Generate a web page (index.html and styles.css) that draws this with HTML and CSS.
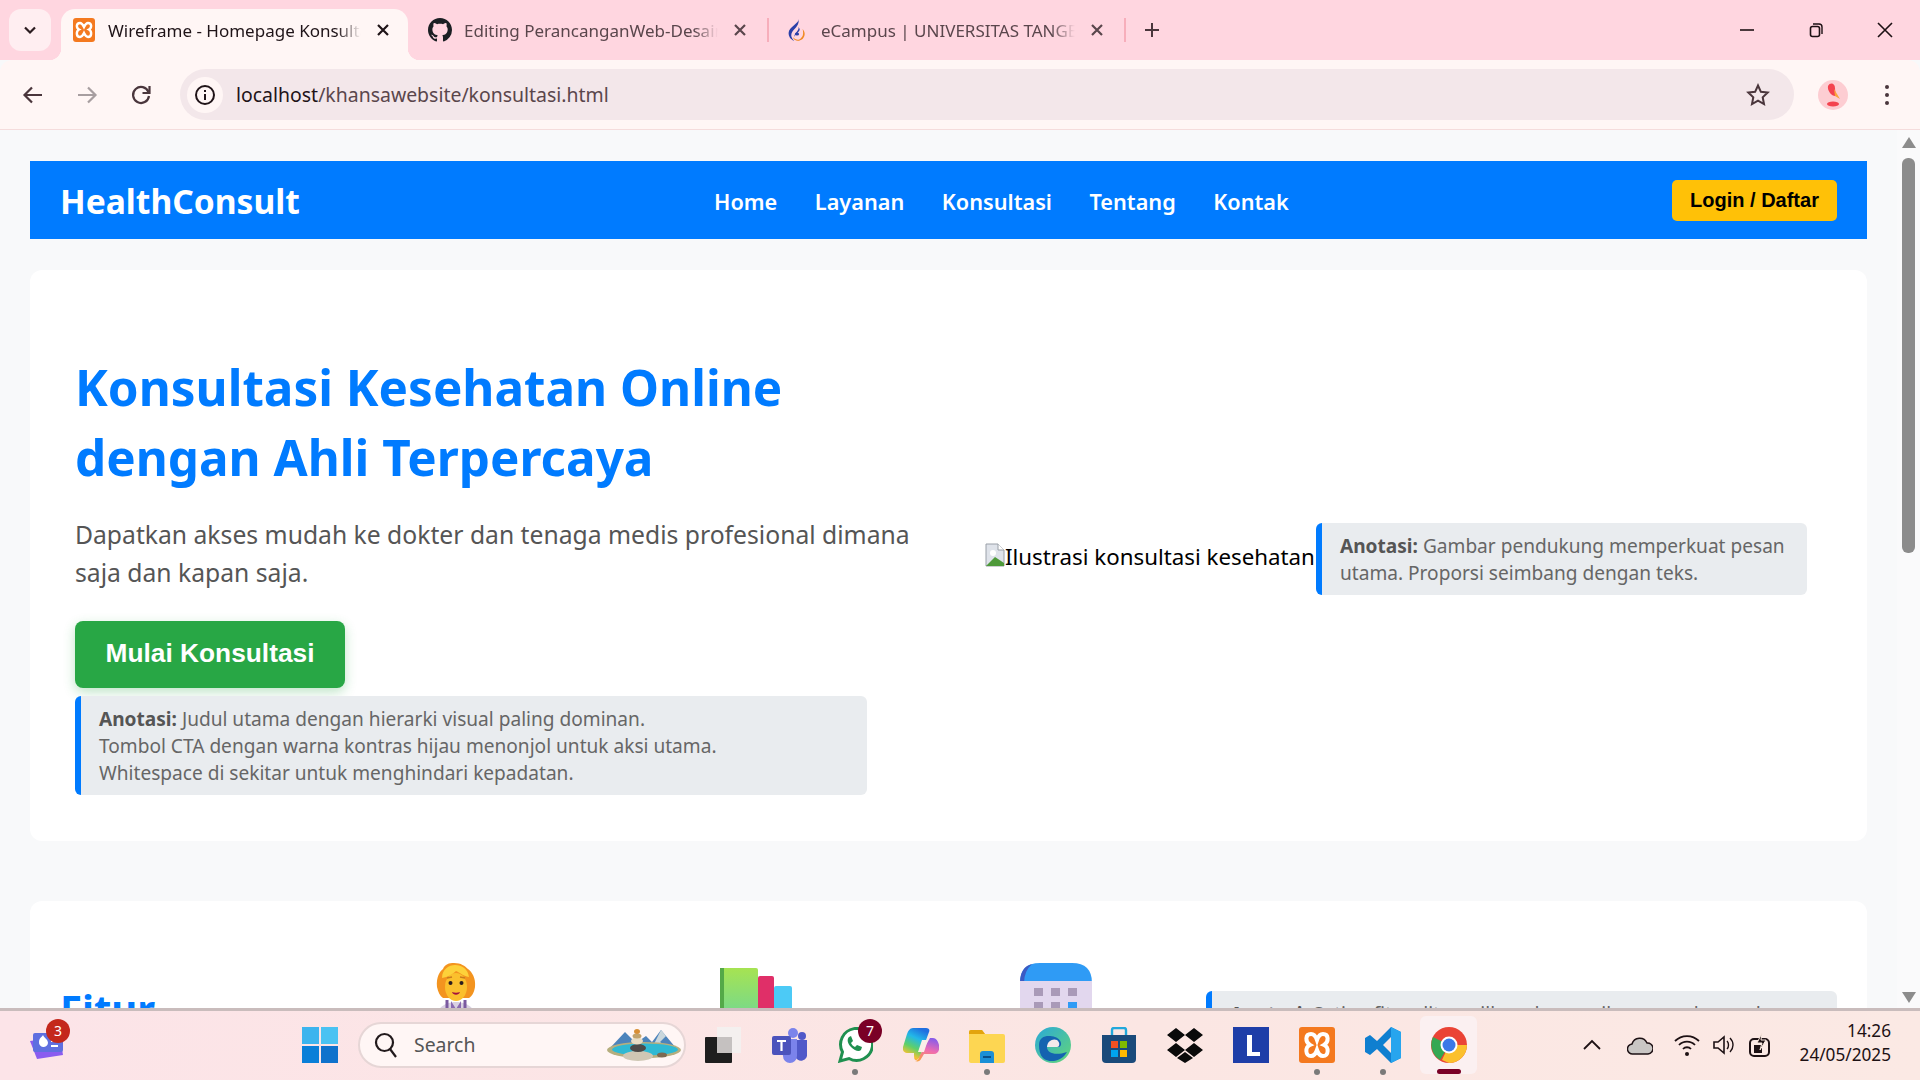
FILE: index.html
```html
<!DOCTYPE html>
<html lang="id">
<head>
    <meta charset="UTF-8">
    <title>Wireframe - Homepage Konsultasi</title>
    <link rel="stylesheet" href="styles.css">
</head>
<body>
    <!-- tab strip -->
    <div class="tabstrip">
        <button class="tab-search">
            <svg width="16" height="16" viewBox="0 0 16 16"><path d="M3 5.500l5 5 5-5" fill="none" stroke="#2b1c20" stroke-width="2.200"/></svg>
        </button>
        <div class="tab tab-active">
            <svg class="favicon" viewBox="0 0 24 24"><rect x="1" width="22" height="24" rx="3" fill="#f4791f"/><path d="M8 5c-4 0-4 5-1 6.500C4 13 4 19 8 19c2 0 3-2 4-4 1 2 2 4 4 4 4 0 4-6 1-7.500 3-1.500 3-6.500-1-6.500-2 0-3 2-4 4-1-2-2-4-4-4z" fill="none" stroke="#fff" stroke-width="2.400"/></svg>
            <span class="tab-title">Wireframe - Homepage Konsultasi</span>
            <svg class="tab-close" viewBox="0 0 12 12"><path d="M1 1l10 10M11 1L1 11" stroke="#1f1418" stroke-width="2.200"/></svg>
        </div>
        <div class="tab">
            <svg class="favicon" viewBox="0 0 16 16"><path fill="#1b1f23" d="M8 0C3.580 0 0 3.580 0 8c0 3.540 2.290 6.530 5.470 7.590.4.070.55-.17.55-.38 0-.19-.01-.82-.01-1.490-2.010.37-2.530-.49-2.690-.94-.09-.23-.48-.94-.82-1.130-.28-.15-.68-.52-.01-.53.63-.01 1.080.58 1.230.82.72 1.210 1.870.87 2.330.66.070-.52.28-.87.51-1.070-1.780-.2-3.640-.89-3.640-3.950 0-.87.310-1.590.820-2.150-.08-.2-.36-1.020.08-2.120 0 0 .67-.21 2.200.82.64-.18 1.320-.27 2-.27s1.360.09 2 .27c1.530-1.040 2.200-.82 2.200-.82.44 1.100.16 1.920.08 2.120.51.56.82 1.270.82 2.150 0 3.070-1.870 3.750-3.650 3.950.29.250.54.730.54 1.480 0 1.070-.01 1.930-.01 2.200 0 .21.15.46.55.38A8.010 8.010 0 0016 8c0-4.420-3.580-8-8-8z"/></svg>
            <span class="tab-title">Editing PerancanganWeb-Desain-Interaksi</span>
            <svg class="tab-close" viewBox="0 0 12 12"><path d="M1 1l10 10M11 1L1 11" stroke="#5a464c" stroke-width="2.200"/></svg>
            <i class="tab-sep"></i>
        </div>
        <div class="tab">
            <svg class="favicon" viewBox="0 0 24 24"><g transform="translate(12 0) scale(1.4 1) translate(-13 0)"><path d="M14 1c1 4-7 8-7 14 0 3 1 6 4 8-2-3-3-6-1-10 2-3 5-7 4-12z" fill="#2a3fa8"/><path d="M14 9c1 3-3 6-3 10 1-4 6-6 3-10z" fill="#2a3fa8"/><circle cx="13" cy="16" r="1.500" fill="#2a3fa8"/><path d="M17 11c2 3 2 7 0 10-1 1-3 2-5 2 3-1 4-3 5-5 .5-2 .5-4 0-7z" fill="#f08a24"/><path d="M10 19c1 2 3 3 5 3-2 1-4 1-5-3z" fill="#f08a24"/></g></svg>
            <span class="tab-title">eCampus | UNIVERSITAS TANGERANG RAYA</span>
            <svg class="tab-close" viewBox="0 0 12 12"><path d="M1 1l10 10M11 1L1 11" stroke="#5a464c" stroke-width="2.200"/></svg>
            <i class="tab-sep"></i>
        </div>
        <span class="tab-new">
            <svg width="16" height="16" viewBox="0 0 16 16"><path d="M8 1v14M1 8h14" stroke="#4a363c" stroke-width="2"/></svg>
        </span>
        <div class="window-controls">
            <svg width="16" height="16" viewBox="0 0 16 16"><path d="M1 8h14" stroke="#1d1114" stroke-width="1.600"/></svg>
            <svg width="16" height="16" viewBox="0 0 16 16"><rect x="2.500" y="4.500" width="9" height="10" rx="2" fill="none" stroke="#1d1114" stroke-width="1.600"/><path d="M5 2h6a3 3 0 013 3v7" fill="none" stroke="#1d1114" stroke-width="1.400"/></svg>
            <svg width="16" height="16" viewBox="0 0 16 16"><path d="M1 1l14 14M15 1L1 15" stroke="#1d1114" stroke-width="1.600"/></svg>
        </div>
    </div>

    <!-- address bar -->
    <div class="toolbar">
        <svg class="tool-icon" viewBox="0 0 24 24"><path d="M21 12H4M11 4.500L3.500 12l7.500 7.500" fill="none" stroke="#4a363c" stroke-width="2.200"/></svg>
        <svg class="tool-icon" viewBox="0 0 24 24"><path d="M3 12h17M13 4.500l7.500 7.500-7.500 7.500" fill="none" stroke="#a79ea0" stroke-width="2.200"/></svg>
        <svg class="tool-icon" viewBox="0 0 24 24"><path d="M19.500 9A8 8 0 1020 13" fill="none" stroke="#4a363c" stroke-width="2.200"/><path d="M20.500 3v7h-7" fill="none" stroke="#4a363c" stroke-width="2.200"/></svg>
        <div class="omnibox">
            <span class="site-info">
                <svg width="22" height="22" viewBox="0 0 22 22"><circle cx="11" cy="11" r="9" fill="none" stroke="#201418" stroke-width="2"/><path d="M11 10v6M11 6v2" stroke="#201418" stroke-width="2"/></svg>
            </span>
            <span class="url">localhost<span class="url-path">/khansawebsite/konsultasi.html</span></span>
            <svg class="star" width="24" height="24" viewBox="0 0 24 24"><path d="M12 2.500l2.900 6.300 6.800.8-5 4.700 1.300 6.800-6-3.400-6 3.400 1.300-6.800-5-4.700 6.800-.8z" fill="none" stroke="#4a363c" stroke-width="2"/></svg>
        </div>
        <span class="avatar">
            <svg width="30" height="30" viewBox="0 0 30 30"><circle cx="15" cy="15" r="15" fill="#fdcdd2"/><path d="M10 6c2-4 7-3 7 2 0 3 1 5 0 8-3 0-8-5-7-10z" fill="#f4434f"/><path d="M16 9l6 10-5-3z" fill="#f9a63a"/><ellipse cx="15" cy="24" rx="6" ry="2.500" fill="#f4434f"/></svg>
        </span>
        <span class="kebab"><i></i><i></i><i></i></span>
    </div>

    <div class="viewport">
        <main class="page">
            <nav class="navbar">
                <div class="logo">HealthConsult</div>
                <ul class="nav-links">
                    <li>Home</li>
                    <li>Layanan</li>
                    <li>Konsultasi</li>
                    <li>Tentang</li>
                    <li>Kontak</li>
                </ul>
                <button class="btn-login">Login / Daftar</button>
            </nav>

            <section class="card hero">
                <div class="hero-text">
                    <h1>Konsultasi Kesehatan Online dengan Ahli Terpercaya</h1>
                    <p>Dapatkan akses mudah ke dokter dan tenaga medis profesional dimana saja dan kapan saja.</p>
                    <button class="btn-cta">Mulai Konsultasi</button>
                    <div class="annotation annotation-hero">
                        <strong>Anotasi:</strong> Judul utama dengan hierarki visual paling dominan.<br>
                        Tombol CTA dengan warna kontras hijau menonjol untuk aksi utama.<br>
                        Whitespace di sekitar untuk menghindari kepadatan.
                    </div>
                </div>
                <div class="hero-image">
                    <span class="broken-img">
                        <svg class="broken-icon" viewBox="0 0 20 24"><path d="M1 1h12l6 6v16H1z" fill="#dfe3ea" stroke="#9aa0a8"/><path d="M13 1v6h6" fill="#fff" stroke="#9aa0a8"/><circle cx="8" cy="10" r="3" fill="#fff"/><path d="M1 23l9-9 9 6v3z" fill="#4e9a3a"/></svg>
                        <span>Ilustrasi konsultasi kesehatan</span>
                    </span>
                    <div class="annotation annotation-image">
                        <strong>Anotasi:</strong> Gambar pendukung memperkuat pesan utama. Proporsi seimbang dengan teks.
                    </div>
                </div>
            </section>

            <section class="card features">
                <h2>Fitur Utama</h2>
                <div class="feature-icon">
                    <svg width="44" height="80" viewBox="0 0 44 80"><path d="M1 60c0-14 9-21 21-21s21 7 21 21z" fill="#d9d0e2"/><path d="M13 37v23M31 37v23" stroke="#7a5aa0" stroke-width="3"/><path d="M17 38l5 8 5-8v16H17z" fill="#8a6ab0"/><path d="M3 24C2 14 6 8 9 6c2-5 6-6 11-6 7 0 11 3 14 6 4 3 8 9 7 18-1 6-3 9-6 11H9c-3-2-5-6-6-11z" fill="#f3941f"/><ellipse cx="22" cy="24" rx="11" ry="14" fill="#fbc02d"/><path d="M8 15C8 6 15 2 21 2c7 0 13 4 14 12-6-1-10-5-13-6-3 3-8 6-14 7z" fill="#fdd13a"/><path d="M13 15l5-1M26 14l5 1" stroke="#c97a1e" stroke-width="1.400"/><circle cx="16.500" cy="20" r="2" fill="#2b1c20"/><circle cx="27.500" cy="20" r="2" fill="#2b1c20"/><path d="M18 29c2.500 1 5.500 1 8 0-1 3.500-7 3.500-8 0z" fill="#a3123f"/></svg>
                </div>
                <div class="feature-icon">
                    <svg width="72" height="80" viewBox="0 0 72 80"><defs><linearGradient id="bar" x1="0" y1="0" x2="0" y2="1"><stop offset="0" stop-color="#a6e352"/><stop offset=".6" stop-color="#78d98a"/></linearGradient></defs><rect x="0" y="5" width="38" height="75" rx="2" fill="url(#bar)"/><rect x="0" y="5" width="4" height="75" fill="#54a948"/><rect x="38" y="13" width="16" height="67" rx="2" fill="#e02f68"/><rect x="54" y="23" width="18" height="57" rx="2" fill="#4ccaf6"/></svg>
                </div>
                <div class="feature-icon">
                    <svg width="72" height="80" viewBox="0 0 72 80"><path d="M0 20Q0 0 20 0h32q20 0 20 20z" fill="#2f9bf5"/><path d="M0 20Q0 4 12 1 4 8 4 20z" fill="#3b5bc4"/><rect x="0" y="18" width="72" height="62" fill="#e2d7ee"/><g fill="#a99ab8"><rect x="14" y="25" width="9" height="8"/><rect x="31" y="25" width="9" height="8"/><rect x="48" y="25" width="9" height="8"/><rect x="14" y="39" width="9" height="8"/><rect x="31" y="39" width="9" height="8"/></g><rect x="48" y="39" width="9" height="8" fill="#2f9bf5"/></svg>
                </div>
                <div class="annotation annotation-features">
                    <strong>Anotasi:</strong> Setiap fitur ditampilkan dengan ikon yang besar dan teks pendek agar mudah dipindai.
                </div>
            </section>
        </main>
        <div class="scrollbar">
            <i class="arrow-up"></i>
            <i class="thumb"></i>
            <i class="arrow-down"></i>
        </div>
    </div>

    <!-- windows taskbar -->
    <footer class="taskbar">
        <span class="widget">
            <svg width="36" height="36" viewBox="0 0 36 36"><path d="M0 14l30-4 3 18-26 4z" fill="#8a5cf0"/><path d="M27 3l7 0v10h-7z" fill="#2fb6d8"/><rect x="3" y="6" width="30" height="19" rx="2" fill="#5f6fe0"/><path d="M9 15c0-4 3-5 4-7 1 3 5 4 5 8a4.500 4.500 0 01-9-1z" fill="#fff"/><path d="M21 14h9M21 19h7" stroke="#fff" stroke-width="2"/></svg>
            <b class="badge badge-red">3</b>
        </span>
        <div class="task-center">
            <svg class="task-icon" viewBox="0 0 36 36"><path d="M0 0h17v17H0z" fill="#3cb4ee"/><path d="M19 0h17v17H19z" fill="#4ac2f2"/><path d="M0 19h17v17H0z" fill="#0a7fd8"/><path d="M19 19h17v17H19z" fill="#0f72cc"/></svg>
            <div class="searchbox">
                <svg width="24" height="26" viewBox="0 0 24 26"><circle cx="10.500" cy="10.500" r="8.500" fill="none" stroke="#221a1c" stroke-width="2.200"/><path d="M16 17l6 8" stroke="#221a1c" stroke-width="2.200"/></svg>
                <span class="search-label">Search</span>
                <svg class="search-art" width="76" height="34" viewBox="0 0 76 34"><path d="M4 20L19 4l11 11L40 8l6 6 9-12 15 18z" fill="#4c83bb"/><path d="M55 2l5 6-6 6 8 6H46z" fill="#c9d6dc"/><ellipse cx="38" cy="22" rx="37" ry="8" fill="#b5ae7e"/><ellipse cx="39" cy="21.500" rx="33" ry="6" fill="#2fb9d3"/><ellipse cx="32" cy="28" rx="15" ry="5" fill="#cfc7b4"/><ellipse cx="32" cy="20" rx="8" ry="4" fill="#4d4a48"/><ellipse cx="31" cy="13" rx="6" ry="3.500" fill="#e8dcc4"/><ellipse cx="31" cy="8" rx="4.500" ry="2.500" fill="#c2a36c"/><ellipse cx="31" cy="3.500" rx="3" ry="2.500" fill="#d88f36"/><ellipse cx="56" cy="27" rx="5" ry="2.500" fill="#7c6a52"/></svg>
            </div>
            <svg class="task-icon" viewBox="0 0 36 36"><rect x="12" y="0" width="24" height="26" fill="#f4f0ef"/><rect y="10" width="27" height="26" rx="1" fill="#1e1e1e"/><rect x="12" y="10" width="15" height="16" fill="#c5c1c0"/></svg>
            <svg class="task-icon" viewBox="0 0 36 36"><circle cx="22" cy="6" r="5" fill="#7b83eb"/><circle cx="31" cy="9" r="4" fill="#5059c9"/><path d="M20 13h16v13a6 6 0 01-12 3z" fill="#5059c9"/><path d="M9 12h17v17a7 7 0 01-14 0z" fill="#7b83eb"/><rect x="1" y="9" width="19" height="19" rx="2" fill="#4b53bc"/><path d="M6 14h9M10.500 14v10" stroke="#fff" stroke-width="2.200"/></svg>
            <span class="task-item task-open">
                <svg class="task-icon" viewBox="0 0 36 36"><path d="M3 34l2.500-9A16 16 0 1112 31.500z" fill="#fff" stroke="#1f9050" stroke-width="3"/><path d="M12 10c-2 2-2 6 2 10s8 5 10 3l1-3-5-2-2 2c-2-1-3-2-4-4l2-2-2-5z" fill="#1f9050"/></svg>
                <b class="badge badge-wine">7</b>
            </span>
            <svg class="task-icon" viewBox="0 0 36 36"><defs><linearGradient id="copl" x1="0.600" y1="0" x2="0.200" y2="1"><stop offset="0" stop-color="#1f6fe0"/><stop offset=".3" stop-color="#22b8e8"/><stop offset=".6" stop-color="#5fd068"/><stop offset=".85" stop-color="#f5c232"/><stop offset="1" stop-color="#f0602c"/></linearGradient><linearGradient id="copr" x1="0.600" y1="0" x2="0.300" y2="1"><stop offset="0" stop-color="#8a5ce8"/><stop offset=".5" stop-color="#f06cb0"/><stop offset="1" stop-color="#f8a040"/></linearGradient></defs><path d="M10 1h13c3 0 4 2 3 4l-7 19c-1 3-3 9-6 9-2 0-2-3-2-7H4c-3 0-5-3-4-6L4 7c1-3 3-6 6-6z" fill="url(#copl)"/><path d="M27 11h3c3 0 5 3 6 7 1 5-1 9-5 9H21l-3 5c-1 2-3 3-6 2 3 0 4-3 5-6z" fill="url(#copr)"/><path d="M19 13h6l-4 12h-6z" fill="#fbeee8"/></svg>
            <span class="task-item task-open">
                <svg class="task-icon" viewBox="0 0 36 36"><path d="M0 5a2 2 0 012-2h11l3 4h18a2 2 0 012 2v25a2 2 0 01-2 2H2a2 2 0 01-2-2z" fill="#fdd652"/><path d="M0 5a2 2 0 012-2h11l3 4H0z" fill="#e3a40d"/><path d="M11 27a3 3 0 013-3h8a3 3 0 013 3v9H11z" fill="#1b8fd6"/><path d="M14 30h8" stroke="#0a4f88" stroke-width="2"/></svg>
            </span>
            <svg class="task-icon" viewBox="0 0 36 36"><defs><linearGradient id="edg" x1="0" y1="0" x2="1" y2="1"><stop offset="0" stop-color="#2aa8d8"/><stop offset="1" stop-color="#63d678"/></linearGradient></defs><circle cx="18" cy="18" r="18" fill="url(#edg)"/><path d="M4 18C4 8 14 8 20 10c6 2 8 8 4 10H12c0 6 8 9 20 5-5 9-17 12-24 6-3-3-4-8-4-13z" fill="#1463b0"/><path d="M12 20h10c3 0 3-5 0-7-4-2-10 1-10 7z" fill="#f3e9ea"/></svg>
            <svg class="task-icon" viewBox="0 0 36 36"><path d="M11 9V3a2 2 0 012-2h10a2 2 0 012 2v6" fill="none" stroke="#21a8dc" stroke-width="2.400"/><path d="M1 8h34v24a4 4 0 01-4 4H5a4 4 0 01-4-4z" fill="#1a4a7a"/><path d="M10 14h7v7h-7z" fill="#f25022"/><path d="M19 14h7v7h-7z" fill="#7fba00"/><path d="M10 23h7v7h-7z" fill="#00a4ef"/><path d="M19 23h7v7h-7z" fill="#ffb900"/></svg>
            <svg class="task-icon" viewBox="0 0 36 36"><path fill="#0a0a0a" d="M9 1l9 7-9 7-9-7zM27 1l9 7-9 7-9-7zM9 16l9 7-9 7-9-7zM27 16l9 7-9 7-9-7zM18 25l8 6-8 5-8-5z"/></svg>
            <svg class="task-icon" viewBox="0 0 36 36"><rect width="36" height="36" fill="#1e3ea8"/><path d="M14 8h5v17h8v4H14z" fill="#fff"/></svg>
            <span class="task-item task-open">
                <svg class="task-icon" viewBox="0 0 36 36"><rect width="36" height="36" rx="3" fill="#f4791f"/><path d="M12 7c-6 0-6 8-1 11-5 2-5 11 1 11 3 0 5-3 6-6 1 3 3 6 6 6 6 0 6-9 1-11 5-3 5-11-1-11-3 0-5 3-6 6-1-3-3-6-6-6z" fill="none" stroke="#fff" stroke-width="4"/></svg>
            </span>
            <span class="task-item task-open">
                <svg class="task-icon" viewBox="0 0 36 36"><path d="M26 0l10 5v26l-10 5-14-14-7 6-5-3V11l5-3 7 6zM26 10l-8 8 8 8z" fill="#0f7fd0"/><path d="M26 0l10 5v26l-10 5z" fill="#27a5ee"/></svg>
            </span>
            <span class="task-chrome">
                <svg class="task-icon" viewBox="0 0 36 36"><circle cx="18" cy="18" r="18" fill="#ea4335"/><path d="M18 18L9 33a18 18 0 01-7-23z" fill="#34a853"/><path d="M18 18h18a18 18 0 01-18 18l-7-3z" fill="#fbc02d"/><circle cx="18" cy="18" r="8.500" fill="#fff"/><circle cx="18" cy="18" r="6.500" fill="#3b78e7"/></svg>
            </span>
        </div>
        <div class="tray">
            <svg class="tray-chevron" width="18" height="12" viewBox="0 0 18 12"><path d="M1 10l8-8 8 8" fill="none" stroke="#1d1114" stroke-width="1.800"/></svg>
            <svg class="tray-cloud" width="26" height="20" viewBox="0 0 26 20"><path d="M6 19a5 5 0 01-1-10 8 8 0 0115-1 5.500 5.500 0 011 11z" fill="#c9c6c4" stroke="#1d1114" stroke-width="1.500"/></svg>
            <svg width="26" height="24" viewBox="0 0 26 24"><path d="M1 8a17 17 0 0124 0M5 12a11 11 0 0116 0M9 16a5.500 5.500 0 018 0" fill="none" stroke="#1d1114" stroke-width="1.800"/><circle cx="13" cy="21" r="2" fill="#1d1114"/></svg>
            <svg width="24" height="24" viewBox="0 0 24 24"><path d="M2 9h4l6-5v16l-6-5H2z" fill="none" stroke="#1d1114" stroke-width="1.600"/><path d="M15 8c2 2 2 6 0 8M18 5c4 4 4 10 0 14" fill="none" stroke="#1d1114" stroke-width="1.400"/></svg>
            <svg width="24" height="26" viewBox="0 0 24 26"><rect x="2" y="7" width="19" height="17" rx="4" fill="none" stroke="#1d1114" stroke-width="2"/><rect x="6" y="13" width="8" height="8" fill="#1d1114"/><path d="M14 1l-5 10h5l-2 7 6-10h-5z" fill="#1d1114" stroke="#fbe9e0"/></svg>
            <div class="clock">
                <span>14:26</span>
                <span>24/05/2025</span>
            </div>
        </div>
    </footer>
</body>
</html>
```

FILE: styles.css
```css
* {
    box-sizing: border-box;
}

html, body {
    margin: 0;
    height: 100%;
}

body {
    display: flex;
    flex-direction: column;
    height: 1080px;
    overflow: hidden;
    font-family: "Noto Sans", "Open Sans", sans-serif;
    background: #f8f9fa;
}

button {
    border: none;
    cursor: pointer;
}

/* tab strip */
.tabstrip {
    display: flex;
    align-items: flex-end;
    flex: 0 0 60px;
    padding-left: 9px;
    background: #ffd6e0;
}

.tab-search {
    display: flex;
    align-items: center;
    justify-content: center;
    align-self: flex-start;
    width: 42px;
    height: 42px;
    margin: 9px 10px 0 0;
    padding: 0;
    background: #ffeef1;
    border-radius: 12px;
}

.tab {
    position: relative;
    display: flex;
    align-items: center;
    flex: 0 0 357px;
    min-width: 0;
    height: 51px;
    padding: 0 19px 9px 20px;
    color: #5a464c;
    font-size: 17px;
}

.tab-active {
    flex-basis: 347px;
    padding-left: 11px;
    color: #1f1418;
    background: #fff6f5;
    border-radius: 14px 14px 0 0;
}

.tab-active::before,
.tab-active::after {
    content: "";
    position: absolute;
    bottom: 0;
    width: 12px;
    height: 12px;
}

.tab-active::before {
    left: -12px;
    background: radial-gradient(circle at 0 0, #ffd6e0 12px, #fff6f5 12.500px);
}

.tab-active::after {
    right: -12px;
    background: radial-gradient(circle at 100% 0, #ffd6e0 12px, #fff6f5 12.500px);
}

.favicon {
    flex: 0 0 24px;
    width: 24px;
    height: 24px;
    margin-right: 12px;
}

.tab-title {
    flex: 1;
    min-width: 0;
    overflow: hidden;
    white-space: nowrap;
    -webkit-mask-image: linear-gradient(to left, transparent, #000 24px);
    mask-image: linear-gradient(to left, transparent, #000 24px);
}

.tab-close {
    flex: 0 0 12px;
    width: 12px;
    height: 12px;
    margin-left: 16px;
}

.tab-sep {
    position: absolute;
    right: -4px;
    top: 9px;
    width: 2px;
    height: 24px;
    background: #f7aebb;
}

.tab-new {
    display: flex;
    align-self: center;
    margin-left: 22px;
}

.window-controls {
    display: flex;
    align-self: center;
    gap: 53px;
    margin-left: auto;
    padding-right: 27px;
}

/* address bar */
.toolbar {
    display: flex;
    align-items: center;
    flex: 0 0 70px;
    padding: 0 20px 0 21px;
    background: #fff6f5;
    border-bottom: 1px solid #f5dcdc;
    border-radius: 12px 12px 0 0;
}

.tool-icon {
    flex: 0 0 24px;
    width: 24px;
    height: 24px;
    margin-right: 30px;
}

.tool-icon:nth-child(3) {
    margin-right: 27px;
}

.omnibox {
    display: flex;
    align-items: center;
    flex: 0 0 1614px;
    height: 51px;
    padding: 0 24px 0 7px;
    background: #f3e7ea;
    border-radius: 26px;
}

.site-info {
    display: flex;
    align-items: center;
    justify-content: center;
    width: 36px;
    height: 36px;
    margin-right: 13px;
    background: #fff6f5;
    border-radius: 50%;
}

.url {
    flex: 1;
    font-size: 19.450px;
    color: #1f1418;
}

.url-path {
    color: #5a464c;
}

.avatar {
    display: flex;
    margin-left: 24px;
}

.kebab {
    display: flex;
    flex-direction: column;
    gap: 4px;
    margin-left: 37px;
}

.kebab i {
    width: 4px;
    height: 4px;
    background: #4a363c;
    border-radius: 50%;
}

/* page */
.viewport {
    display: flex;
    flex: 0 0 878px;
    overflow: hidden;
}

.page {
    flex: 1;
    min-width: 0;
    padding: 31px 30px 0;
    overflow: hidden;
}

.navbar {
    display: flex;
    align-items: center;
    height: 78px;
    padding: 0 30px;
    color: #fff;
    background: #007bff;
}

.logo {
    width: 654px;
    margin-top: 2px;
    font-size: 33.600px;
    font-weight: 700;
}

.nav-links {
    display: flex;
    gap: 37.500px;
    margin: 2px 0 0;
    padding: 0;
    list-style: none;
    font-size: 21.700px;
    font-weight: 600;
}

.btn-login {
    width: 165px;
    height: 41px;
    margin: 0 0 0 auto;
    padding: 0;
    color: #000;
    background: #ffc107;
    border-radius: 5px;
    font-family: "Liberation Sans", Arial, sans-serif;
    font-size: 20px;
    font-weight: 700;
}

.card {
    background: #fff;
    border-radius: 12px;
}

.hero {
    display: grid;
    grid-template-columns: 880px 1fr;
    gap: 30px;
    margin-top: 31px;
    padding: 45px 45px 46px;
}

.hero-text {
    padding-top: 37px;
}

.hero-text h1 {
    width: 760px;
    margin: 0;
    color: #007bff;
    font-size: 49.400px;
    font-weight: 700;
    line-height: 70px;
}

.hero-text p {
    margin: 24px 0 0;
    color: #555;
    font-size: 24.700px;
    line-height: 37.500px;
}

.btn-cta {
    display: block;
    width: 270px;
    height: 67px;
    margin-top: 30px;
    padding: 0 0 2px;
    color: #fff;
    background: #28a745;
    border-radius: 8px;
    box-shadow: 0 4px 12px rgba(40, 167, 69, 0.3);
    font-family: "Liberation Sans", Arial, sans-serif;
    font-size: 26.300px;
    font-weight: 700;
}

.annotation {
    padding: 10px 18px 8px;
    color: #666;
    background: #e9ecef;
    border-left: 6px solid #007bff;
    border-radius: 6px;
    font-size: 19.100px;
    line-height: 27px;
}

.annotation strong {
    color: #555;
}

.annotation-hero {
    width: 792px;
    margin-top: 8px;
}

.hero-image {
    display: flex;
    align-items: center;
    padding-top: 8px;
}

.broken-img {
    display: flex;
    align-items: center;
    flex: 0 0 331px;
    min-width: 0;
    padding-bottom: 6px;
    color: #000;
    font-size: 22.300px;
    white-space: nowrap;
}

.broken-icon {
    flex: 0 0 20px;
    width: 20px;
    height: 24px;
    margin-bottom: 3px;
}

.annotation-image {
    width: 491px;
}

.features {
    display: grid;
    grid-template-columns: 246px repeat(3, 300px) 631px;
    align-items: start;
    height: 300px;
    margin-top: 60px;
    padding: 62px 30px 0;
}

.features h2 {
    width: 120px;
    margin: 21px 0 0;
    color: #007bff;
    font-size: 40px;
    line-height: 50px;
}

.feature-icon {
    display: flex;
    justify-content: center;
}

.annotation-features {
    margin-top: 28px;
}

/* scrollbar */
.scrollbar {
    display: flex;
    flex-direction: column;
    align-items: center;
    flex: 0 0 23px;
    padding-top: 7px;
    background: #fafafb;
}

.arrow-up,
.arrow-down {
    width: 0;
    height: 0;
    border-left: 7px solid transparent;
    border-right: 7px solid transparent;
}

.arrow-up {
    border-bottom: 11px solid #8c8c8c;
}

.arrow-down {
    margin-top: auto;
    margin-bottom: 5px;
    border-top: 11px solid #8c8c8c;
}

.thumb {
    width: 13px;
    height: 395px;
    margin-top: 10px;
    background: #8c8c8c;
    border-radius: 6px;
}

/* taskbar */
.taskbar {
    position: relative;
    display: flex;
    align-items: center;
    flex: 0 0 72px;
    padding: 0 0 2px 30px;
    background: linear-gradient(to right, #fce4e8, #fbe6e3 60%, #fbe9e4);
    border-top: 3px solid #c9bcbc;
}

.widget {
    position: relative;
    display: flex;
}

.badge {
    position: absolute;
    top: -8px;
    right: -4px;
    width: 24px;
    height: 24px;
    color: #fff;
    border-radius: 50%;
    font-size: 14px;
    font-weight: 400;
    line-height: 24px;
    text-align: center;
}

.badge-red {
    background: #c4281c;
}

.badge-wine {
    background: #7a0026;
}

.task-center {
    display: flex;
    align-items: center;
    margin-left: 236px;
}

.task-icon {
    display: block;
    flex: 0 0 36px;
    width: 36px;
    height: 36px;
    margin-right: 30px;
}

.task-center > .task-icon:first-child {
    margin-right: 20px;
}

.searchbox {
    display: flex;
    align-items: center;
    width: 328px;
    height: 46px;
    margin-right: 19px;
    padding-left: 14px;
    background: #fff6f5;
    border: 2px solid #e6d6d6;
    border-radius: 23px;
}

.search-label {
    margin-left: 16px;
    color: #555;
    font-size: 19.400px;
}

.search-art {
    margin-left: auto;
    margin-right: 2px;
}

.task-item {
    position: relative;
    display: block;
}

.task-open::after {
    content: "";
    position: absolute;
    left: 15px;
    bottom: -12px;
    width: 6px;
    height: 6px;
    background: #7a7a7a;
    border-radius: 50%;
}

.task-item .badge {
    top: -8px;
    right: 21px;
}

.task-chrome {
    position: relative;
    display: block;
    width: 57px;
    height: 58px;
    margin-left: -11px;
    padding: 11px 0 11px 11px;
    background: #fbf0f1;
    border-radius: 6px;
}

.task-chrome::after {
    content: "";
    position: absolute;
    left: 17px;
    bottom: 0;
    width: 24px;
    height: 5px;
    background: #7a0026;
    border-radius: 3px;
}

.tray {
    display: flex;
    align-items: center;
    gap: 12px;
    margin-left: auto;
    padding-right: 29px;
}

.tray-chevron {
    margin-right: 14px;
}

.tray-cloud {
    margin-right: 9px;
}

.clock {
    display: flex;
    flex-direction: column;
    align-items: flex-end;
    margin-left: 16px;
    padding-bottom: 3px;
    color: #1d1114;
    font-size: 17.200px;
    line-height: 24px;
}
```
